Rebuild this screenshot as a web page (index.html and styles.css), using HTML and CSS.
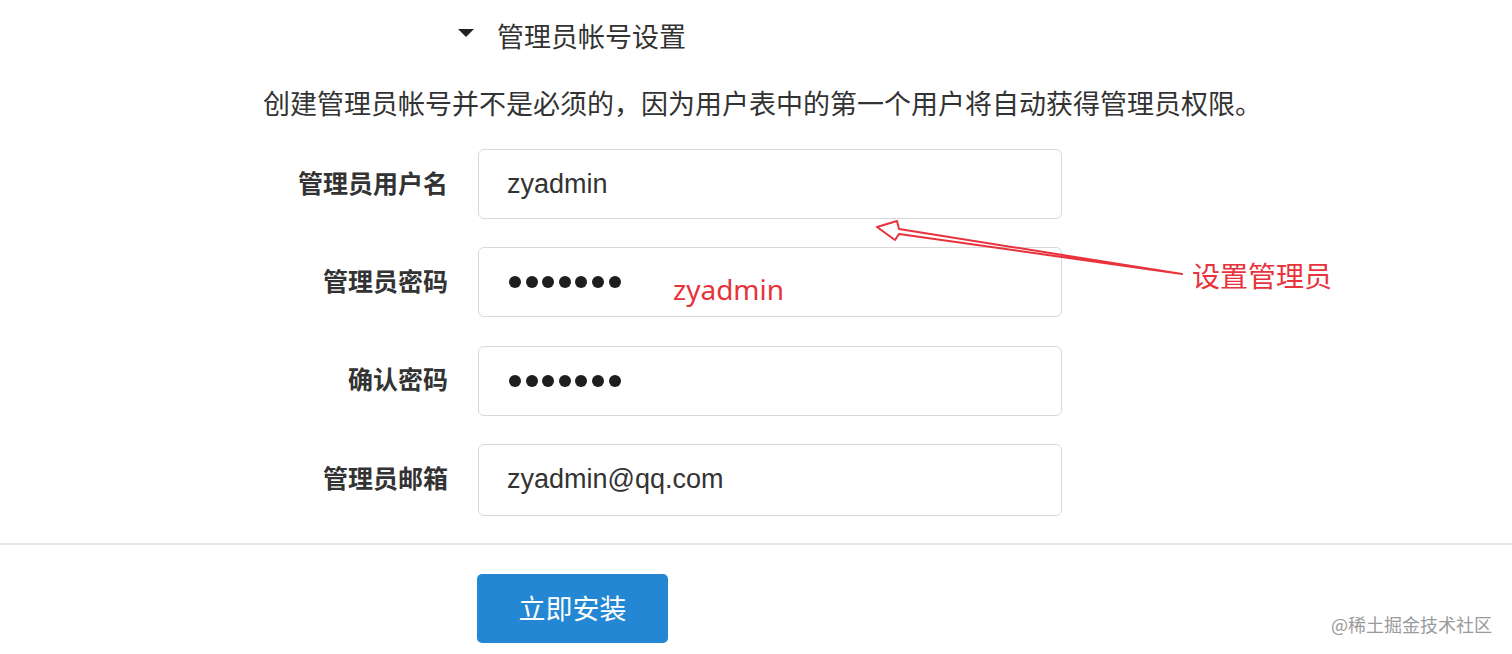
FILE: index.html
```html
<!DOCTYPE html>
<html lang="zh-CN">
<head>
<meta charset="utf-8">
<title>管理员帐号设置</title>
<link rel="stylesheet" href="styles.css">
</head>
<body>
<main class="page">
  <div class="section-title">
    <span class="caret"></span>
    <h2 class="title-text">管理员帐号设置</h2>
  </div>
  <p class="desc">创建管理员帐号并不是必须的，因为用户表中的第一个用户将自动获得管理员权限。</p>
  <form class="form">
    <div class="row">
      <label class="label">管理员用户名</label>
      <div class="field">zyadmin</div>
    </div>
    <div class="row">
      <label class="label">管理员密码</label>
      <div class="field dots"><span class="dot"></span><span class="dot"></span><span class="dot"></span><span class="dot"></span><span class="dot"></span><span class="dot"></span><span class="dot"></span></div>
    </div>
    <div class="row">
      <label class="label">确认密码</label>
      <div class="field dots"><span class="dot"></span><span class="dot"></span><span class="dot"></span><span class="dot"></span><span class="dot"></span><span class="dot"></span><span class="dot"></span></div>
    </div>
    <div class="row">
      <label class="label">管理员邮箱</label>
      <div class="field field-last">zyadmin@qq.com</div>
    </div>
  </form>
  <hr class="divider">
  <div class="actions">
    <button class="btn" type="button">立即安装</button>
  </div>
</main>

<svg class="arrow" width="1512" height="654" viewBox="0 0 1512 654" aria-hidden="true">
  <polygon points="1182,274 899,229 897,221 877,227 895,240 899,234" fill="none" stroke="#e8323c" stroke-width="2" stroke-linejoin="round"/>
</svg>
<div class="note note-pass">zyadmin</div>
<div class="note note-label">设置管理员</div>
<div class="watermark">@稀土掘金技术社区</div>
</body>
</html>
```
FILE: styles.css
```css
html, body {
  margin: 0;
  padding: 0;
  background: #ffffff;
}
body {
  position: relative;
  width: 1512px;
  height: 654px;
  overflow: hidden;
  font-family: "Noto Sans CJK SC", "Noto Sans", sans-serif;
  color: #333333;
}
.page {
  display: flex;
  flex-direction: column;
}
.section-title {
  display: flex;
  align-items: center;
  margin-top: 18px;
  padding-left: 458px;
  height: 36px;
}
.caret {
  width: 0;
  height: 0;
  border-left: 8px solid transparent;
  border-right: 8px solid transparent;
  border-top: 8px solid #222222;
  transform: translateY(-3px);
}
.title-text {
  margin: 0 0 0 23px;
  font-size: 27px;
  font-weight: normal;
  line-height: 36px;
  color: #333333;
}
.desc {
  margin: 31px 0 0 0;
  padding-left: 263px;
  font-size: 27px;
  line-height: 36px;
  color: #333333;
}
.form {
  display: flex;
  flex-direction: column;
  gap: 28.33px;
  margin-top: 28px;
}
.row {
  display: grid;
  grid-template-columns: 448px 584px;
  column-gap: 30px;
  align-items: center;
}
.label {
  text-align: right;
  font-size: 25px;
  font-weight: bold;
  line-height: 34px;
  padding-bottom: 5px;
  color: #333333;
}
.field {
  box-sizing: border-box;
  height: 70px;
  border: 1px solid #d9d9d9;
  border-radius: 6px;
  padding-left: 28px;
  display: flex;
  align-items: center;
  font-family: "Liberation Sans", Arial, sans-serif;
  font-size: 27px;
  color: #333333;
}
.field-last {
  height: 72px;
}
.dots {
  gap: 4.6px;
  padding-left: 30px;
}
.dot {
  width: 12px;
  height: 12px;
  border-radius: 50%;
  background: #1e1e1e;
}
.divider {
  margin: 27px 0 0 0;
  border: 0;
  height: 2px;
  background: #e6e6e6;
}
.actions {
  padding-left: 477px;
  margin-top: 29px;
}
.btn {
  width: 191px;
  height: 69px;
  border: 0;
  border-radius: 5px;
  background: #2387d3;
  color: #ffffff;
  font-family: "Noto Sans CJK SC", sans-serif;
  font-size: 27px;
  line-height: 36px;
  padding: 0;
}
.arrow {
  position: absolute;
  left: 0;
  top: 0;
  pointer-events: none;
}
.note {
  position: absolute;
  color: #e8323c;
  line-height: 36px;
}
.note-pass {
  left: 673px;
  top: 271px;
  font-family: "Noto Sans", sans-serif;
  font-size: 28px;
}
.note-label {
  left: 1192px;
  top: 257px;
  font-family: "Noto Sans CJK SC", sans-serif;
  font-size: 28px;
}
.watermark {
  position: absolute;
  right: 20px;
  top: 611px;
  font-family: "Noto Sans CJK SC", sans-serif;
  font-size: 18px;
  line-height: 26px;
  color: #9a9a9a;
}
```
